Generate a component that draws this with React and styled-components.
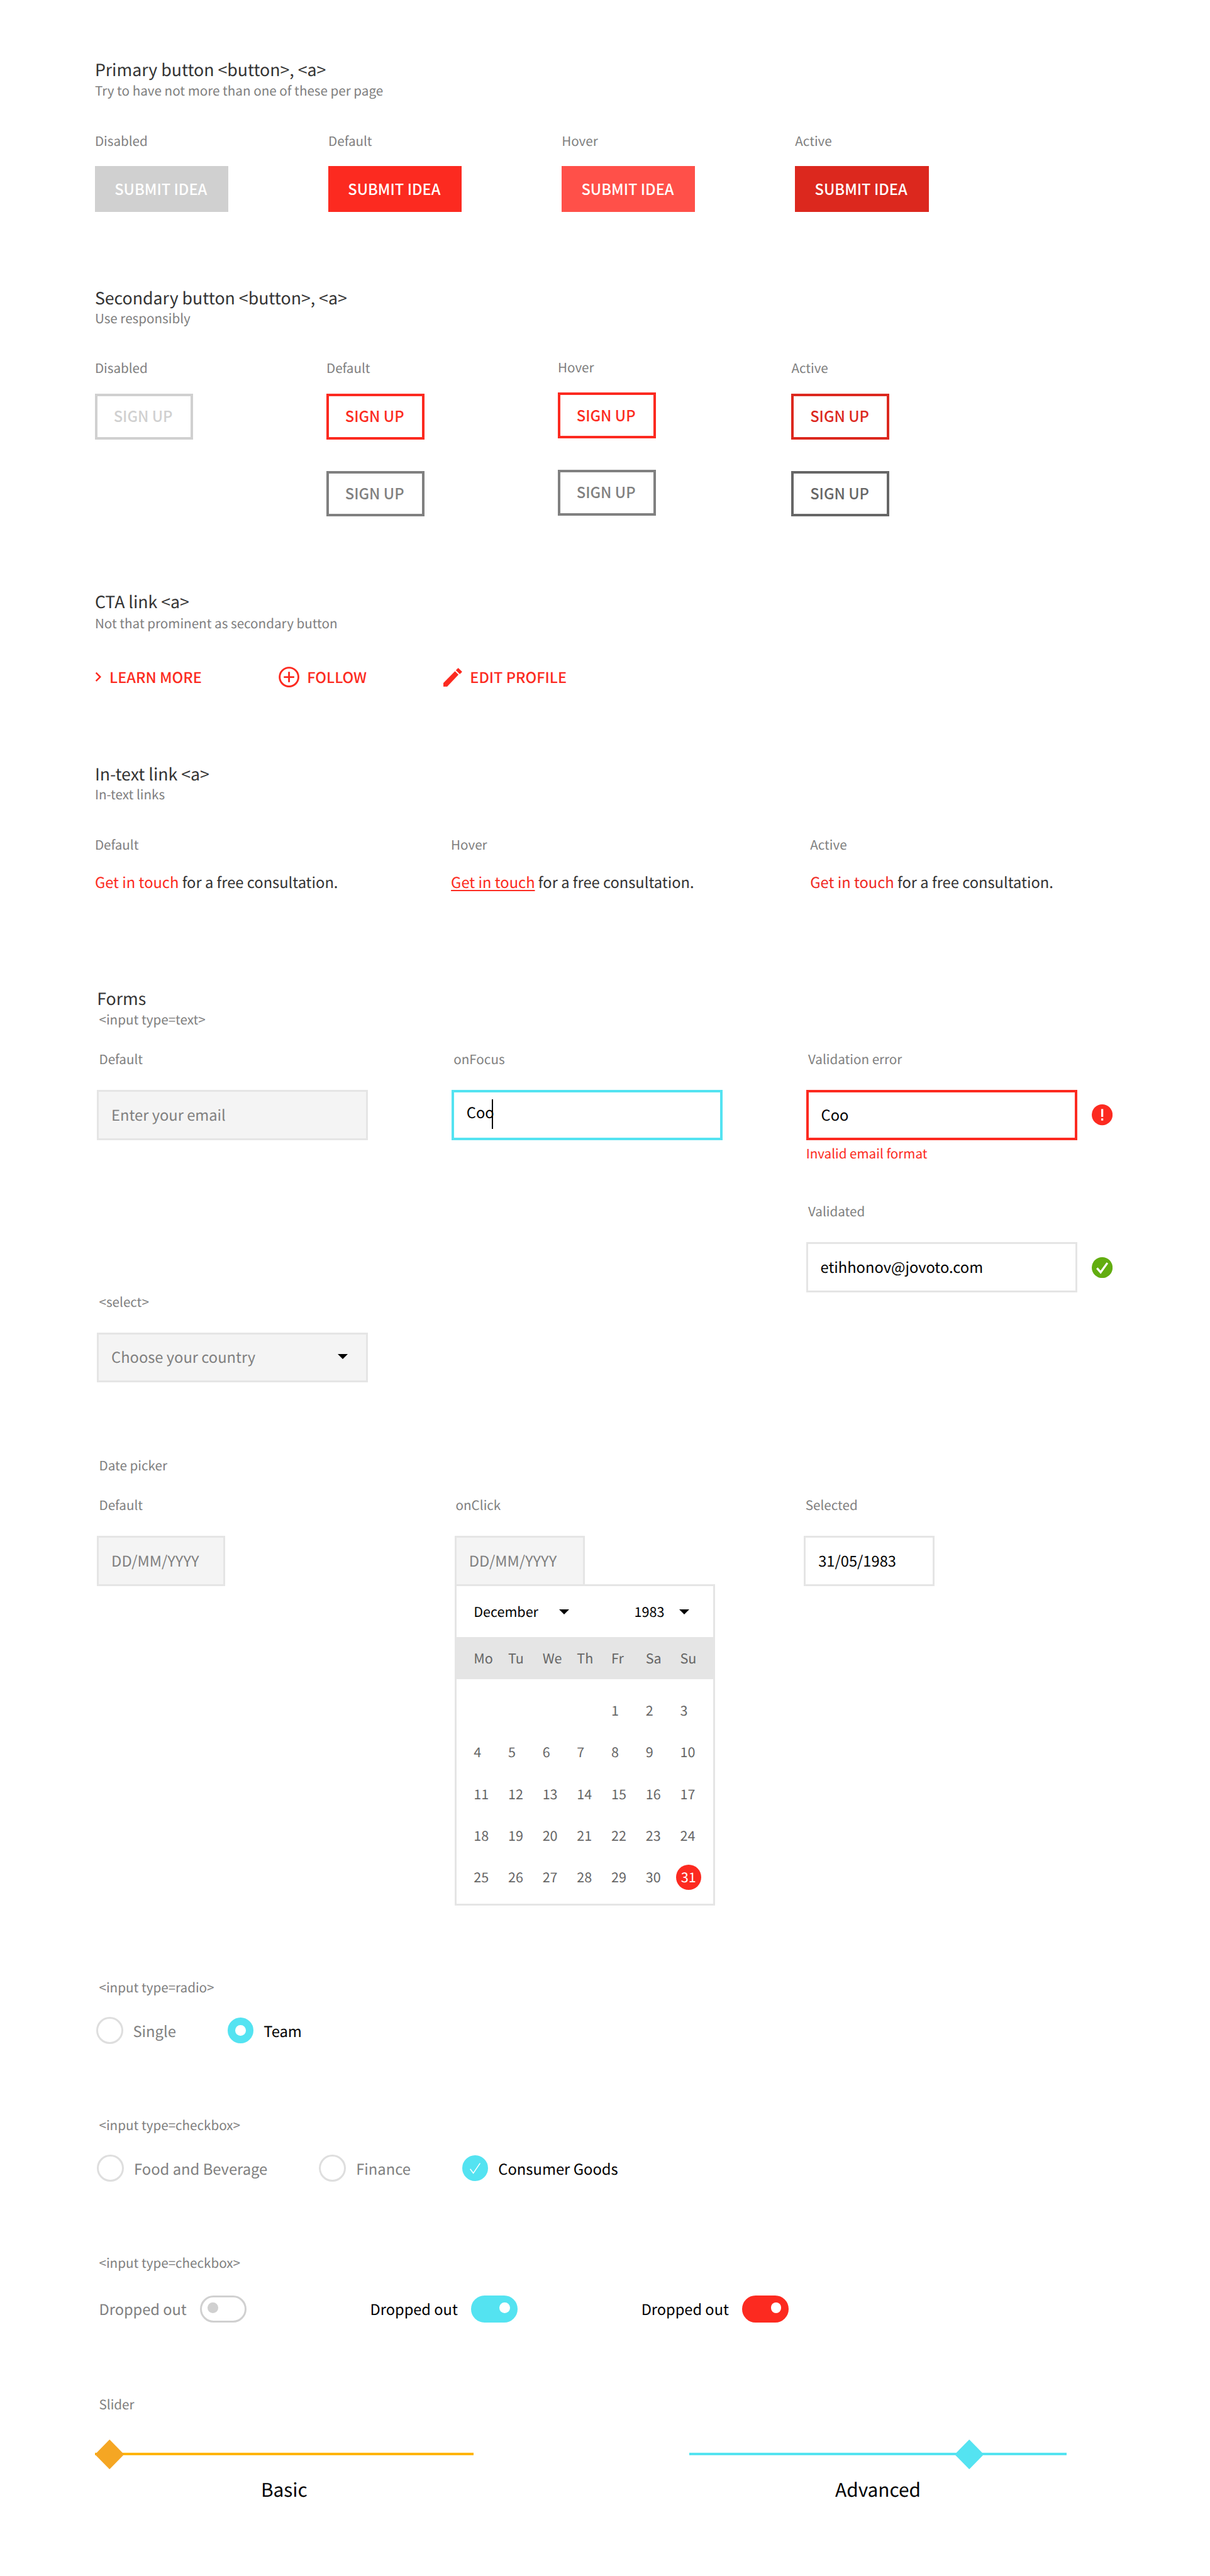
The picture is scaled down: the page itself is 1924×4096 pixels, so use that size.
import React from "react";
import styled, { createGlobalStyle } from "styled-components";

const u = (n) => `${n * 0.829}px`;
const RED = "#fc2a20";
const CYAN = "#54e3f1";
const LINE = "4px";

const Global = createGlobalStyle`
  * { box-sizing: border-box; }
  html, body { margin: 0; padding: 0; background: #fff; }
  body {
    font-family: "Noto Sans CJK SC", "Noto Sans", sans-serif;
    text-rendering: geometricPrecision;
    -webkit-font-smoothing: antialiased;
  }
`;

const Page = styled.div`
  width: 1924px;
  min-height: 4096px;
  padding: ${u(115)} 0 0 ${u(182)};
  overflow: hidden;
`;
const Title = styled.h2`
  height: ${u(40)};
  margin: ${(p) => u(p.$mt || 0)} 0 0;
  font-size: ${u(32.2)};
  line-height: ${u(35)};
  font-weight: 400;
  color: #333;
`;
const Note = styled.div`
  height: ${u(40)};
  margin: ${(p) => u(p.$mt || 0)} 0 0 ${(p) => u(p.$ml || 0)};
  font-size: ${u(24.9)};
  line-height: ${u(35)};
  font-weight: 400;
  color: #808080;
  white-space: nowrap;
`;
const Columns = styled.div`
  display: grid;
  grid-template-columns: ${(p) => p.$cols};
`;
const Column = styled.div`
  display: flex;
  flex-direction: column;
  align-items: flex-start;
  margin-top: ${(p) => u(p.$shift || 0)};
`;
const Solid = styled.button`
  display: block;
  width: ${u(256)};
  height: ${u(88)};
  margin-top: ${u(27)};
  border: 0;
  padding: 0 ${u(3)} ${u(2)} 0;
  font: inherit;
  font-size: ${u(28.6)};
  font-weight: 500;
  color: #fff;
  background: ${(p) => p.$bg};
`;
const Outline = styled.button`
  display: block;
  width: ${u(188)};
  height: ${u(88)};
  margin-top: ${(p) => u(p.$mt)};
  padding: 0 ${u(3)} ${u(2)} 0;
  font: inherit;
  font-size: ${u(28.6)};
  font-weight: 500;
  background: #fff;
  color: ${(p) => p.$c};
  border: ${LINE} solid ${(p) => p.$c};
`;
const CtaRow = styled.div`
  display: flex;
  align-items: center;
  gap: ${u(147)};
  height: ${u(40)};
  margin-top: ${u(62)};
`;
const Cta = styled.a`
  display: flex;
  align-items: center;
  gap: ${u(15)};
  color: ${RED};
  font-size: ${u(28.4)};
  font-weight: 500;
  line-height: ${u(36)};
`;
const Sentence = styled.p`
  height: ${u(40)};
  margin: ${u(33)} 0 0;
  font-size: ${u(28.6)};
  line-height: ${u(36)};
  font-weight: 400;
  color: #333;
  white-space: nowrap;
`;
const InText = styled.a`
  color: ${(p) => p.$c || RED};
  text-decoration: ${(p) => (p.$under ? "underline" : "none")};
  text-underline-offset: ${u(4)};
`;
const Forms = styled.div`
  margin: ${u(182)} 0 0 ${u(4)};
`;
const FieldRow = styled.div`
  display: flex;
  align-items: center;
  gap: ${u(28)};
  margin-top: ${u(37)};
`;
const Input = styled.div`
  display: flex;
  align-items: center;
  justify-content: space-between;
  width: ${(p) => u(p.$w || 520)};
  height: ${u(96)};
  padding: 0 ${(p) => u(p.$pr || 26)} ${u(3)} ${u(24)};
  font-size: ${u(28.6)};
  font-weight: 400;
  color: ${(p) => (p.$filled ? "#000" : "#808080")};
  background: ${(p) => (p.$filled ? "#fff" : "#f4f4f4")};
  border: ${(p) => (p.$border ? LINE : u(4))} solid ${(p) => p.$border || "#e5e5e5"};
  white-space: nowrap;
`;
const Caret = styled.i`
  display: inline-block;
  width: 2px;
  height: ${u(57)};
  margin-left: ${u(-4)};
  background: #000;
  vertical-align: middle;
`;
const ErrorText = styled.div`
  height: ${u(40)};
  margin-top: ${u(7)};
  font-size: ${u(24.9)};
  line-height: ${u(35)};
  font-weight: 400;
  color: ${RED};
`;
const Arrow = styled.span`
  display: inline-block;
  width: 0;
  height: 0;
  border-left: ${u(10)} solid transparent;
  border-right: ${u(10)} solid transparent;
  border-top: ${u(10)} solid #000;
`;
const Calendar = styled.div`
  width: ${u(500)};
  height: ${u(616)};
  margin-top: ${u(-3)};
  border: ${u(4)} solid #e5e5e5;
  background: #fff;
`;
const CalHead = styled.div`
  display: flex;
  align-items: center;
  height: ${u(98)};
  padding-left: ${u(33)};
  font-size: ${u(26)};
  font-weight: 400;
  color: #000;
`;
const CalPick = styled.div`
  display: flex;
  align-items: center;
  justify-content: space-between;
  width: ${(p) => u(p.$w)};
  margin-right: ${(p) => u(p.$mr || 0)};
`;
const WeekBand = styled.div`
  display: grid;
  grid-template-columns: repeat(7, ${u(66)});
  align-items: center;
  height: ${u(80)};
  padding-left: ${u(33)};
  background: #e5e5e5;
  font-size: ${u(26)};
  font-weight: 400;
  color: #666;
`;
const Days = styled.div`
  display: grid;
  grid-template-columns: repeat(7, ${u(66)});
  grid-auto-rows: ${u(80)};
  align-items: center;
  justify-items: start;
  margin-top: ${u(20)};
  padding-left: ${u(33)};
  font-size: ${u(26)};
  font-weight: 400;
  color: #666;
`;
const Day = styled.span`
  display: block;
  ${(p) =>
    p.$on
      ? `display:flex;align-items:center;justify-content:center;width:${u(48)};height:${u(48)};margin-left:${u(-8)};border-radius:50%;background:${RED};color:#fff;`
      : ""}
`;
const Options = styled.div`
  display: flex;
  align-items: center;
  gap: ${u(99)};
  height: ${u(52)};
  margin: ${(p) => u(p.$mt || 35)} 0 0 ${(p) => u(p.$ml || 0)};
`;
const Option = styled.label`
  display: flex;
  align-items: center;
  gap: ${u(19)};
  font-size: ${u(28.7)};
  font-weight: 400;
  color: ${(p) => (p.$on ? "#000" : "#808080")};
  white-space: nowrap;
`;
const Radio = styled.span`
  display: flex;
  align-items: center;
  justify-content: center;
  width: ${(p) => u(p.$on ? 50 : 52)};
  height: ${(p) => u(p.$on ? 50 : 52)};
  border-radius: 50%;
  border: ${u(4)} solid #dedede;
  ${(p) => (p.$on ? `background:${CYAN};border-color:${CYAN};` : "")}
`;
const RadioDot = styled.span`
  display: block;
  width: ${u(20)};
  height: ${u(20)};
  border-radius: 50%;
  background: #fff;
`;
const ToggleRow = styled.div`
  display: flex;
  align-items: center;
  gap: ${u(237)};
  margin: ${u(41)} 0 0 ${u(4)};
`;
const ToggleItem = styled.div`
  display: flex;
  align-items: center;
  gap: ${u(26)};
  font-size: ${u(28.5)};
  font-weight: 400;
  color: ${(p) => (p.$on ? "#000" : "#808080")};
  white-space: nowrap;
`;
const Toggle = styled.span`
  display: flex;
  align-items: center;
  justify-content: ${(p) => (p.$bg ? "flex-end" : "flex-start")};
  width: ${u(89)};
  height: ${u(52)};
  padding: 0 ${u(11)} ${u(4)};
  border-radius: ${u(26)};
  border: ${u(4)} solid ${(p) => p.$bg || "#d0d0d0"};
  background: ${(p) => p.$bg || "#fff"};
`;
const ToggleKnob = styled.span`
  display: block;
  width: ${u(20)};
  height: ${u(20)};
  border-radius: 50%;
  background: ${(p) => (p.$on ? "#fff" : "#d0d0d0")};
`;
const Sliders = styled.div`
  display: grid;
  grid-template-columns: ${u(726)} ${u(724)};
  column-gap: ${u(414)};
  margin-top: ${u(45)};
`;
const Slider = styled.div`
  display: flex;
  flex-direction: column;
`;
const Track = styled.div`
  position: relative;
  height: ${u(57)};
  &::before {
    content: "";
    position: absolute;
    left: 0;
    right: 0;
    top: 50%;
    height: ${u(4)};
    margin-top: ${u(-2)};
    background: ${(p) => p.$c};
  }
`;
const Diamond = styled.svg`
  position: absolute;
  top: 0;
  left: ${(p) => u(p.$x)};
  width: ${u(56)};
  height: ${u(57)};
`;
const Caption = styled.div`
  margin-top: ${u(15)};
  font-size: ${u(36)};
  line-height: ${u(46)};
  font-weight: 400;
  color: #000;
  text-align: center;
`;
const IconSvg = styled.svg`
  display: block;
  flex: none;
  width: ${(p) => u(p.$w)};
  height: ${(p) => u(p.$h)};
`;

const StateCol = ({ label, shift, children }) => (
  <Column $shift={shift}>
    <Note $mt={56}>{label}</Note>
    {children}
  </Column>
);

const AlertIcon = () => (
  <IconSvg viewBox="0 0 40 40" $w={40} $h={40}>
    <circle cx="20" cy="20" r="20" fill={RED} />
    <rect x="18" y="9" width="4" height="15" fill="#fff" />
    <rect x="18" y="27" width="4" height="4" fill="#fff" />
  </IconSvg>
);
const OkIcon = () => (
  <IconSvg viewBox="0 0 40 40" $w={40} $h={40}>
    <circle cx="20" cy="20" r="20" fill="#62ad10" />
    <path d="M10 21l7 8L30 11" fill="none" stroke="#fff" strokeWidth="4" />
  </IconSvg>
);
const DIAMOND = <polygon points="28,0 56,28.5 28,57 0,28.5" />;

const weeks = ["Mo", "Tu", "We", "Th", "Fr", "Sa", "Su"];
const cells = [...Array(4).fill(""), ...Array.from({ length: 31 }, (_, i) => i + 1)];

export default function App() {
  return (
    <Page>
      <Global />
      <Title>{"Primary button <button>, <a>"}</Title>
      <Note $mt={1}>Try to have not more than one of these per page</Note>
      <Columns $cols={`repeat(4, ${u(447.7)})`}>
        <StateCol label="Disabled"><Solid $bg="#d0d0d0">SUBMIT IDEA</Solid></StateCol>
        <StateCol label="Default"><Solid $bg={RED}>SUBMIT IDEA</Solid></StateCol>
        <StateCol label="Hover"><Solid $bg="#ff5049">SUBMIT IDEA</Solid></StateCol>
        <StateCol label="Active"><Solid $bg="#dc281e">SUBMIT IDEA</Solid></StateCol>
      </Columns>

      <Title $mt={145}>{"Secondary button <button>, <a>"}</Title>
      <Note>Use responsibly</Note>
      <Columns $cols={`${u(444)} ${u(444)} ${u(448)} ${u(448)}`}>
        <StateCol label="Disabled"><Outline $mt={27} $c="#d0d0d0">SIGN UP</Outline></StateCol>
        <StateCol label="Default">
          <Outline $mt={27} $c={RED}>SIGN UP</Outline>
          <Outline $mt={60} $c="#808080">SIGN UP</Outline>
        </StateCol>
        <StateCol label="Hover" shift={-2}>
          <Outline $mt={27} $c={RED}>SIGN UP</Outline>
          <Outline $mt={60} $c="#808080">SIGN UP</Outline>
        </StateCol>
        <StateCol label="Active">
          <Outline $mt={27} $c="#dc281e">SIGN UP</Outline>
          <Outline $mt={60} $c="#666">SIGN UP</Outline>
        </StateCol>
      </Columns>

      <Title $mt={144}>{"CTA link <a>"}</Title>
      <Note $mt={2}>Not that prominent as secondary button</Note>
      <CtaRow>
        <Cta>
          <IconSvg viewBox="0 0 13 20" $w={13} $h={20}>
            <path d="M2 2l8 8-8 8" fill="none" stroke={RED} strokeWidth="3" />
          </IconSvg>
          LEARN MORE
        </Cta>
        <Cta>
          <IconSvg viewBox="0 0 40 40" $w={40} $h={40}>
            <circle cx="20" cy="20" r="18" fill="none" stroke={RED} strokeWidth="3.5" />
            <path d="M20 10v20M10 20h20" stroke={RED} strokeWidth="3.5" />
          </IconSvg>
          FOLLOW
        </Cta>
        <Cta>
          <IconSvg viewBox="0 0 36 36" $w={36} $h={36}>
            <polygon points="0,36 0,29 22.3,6.3 29,13 7.3,36" fill={RED} />
            <polygon points="25,4.5 28.5,1 35,7.5 31.5,11" fill={RED} stroke={RED} strokeWidth="1.5" strokeLinejoin="round" />
          </IconSvg>
          EDIT PROFILE
        </Cta>
      </CtaRow>

      <Title $mt={147}>{"In-text link <a>"}</Title>
      <Note>In-text links</Note>
      <Columns $cols={`${u(683)} ${u(689)} 1fr`}>
        <Column>
          <Note $mt={56}>Default</Note>
          <Sentence><InText>Get in touch</InText> for a free consultation.</Sentence>
        </Column>
        <Column>
          <Note $mt={56}>Hover</Note>
          <Sentence><InText $under>Get in touch</InText> for a free consultation.</Sentence>
        </Column>
        <Column>
          <Note $mt={56}>Active</Note>
          <Sentence><InText $c="#f0291f">Get in touch</InText> for a free consultation.</Sentence>
        </Column>
      </Columns>

      <Forms>
        <Title>Forms</Title>
        <Note $mt={1} $ml={4}>{"<input type=text>"}</Note>
        <Columns $cols={`${u(680)} ${u(680)} 1fr`}>
          <Column>
            <Note $mt={36} $ml={4}>Default</Note>
            <FieldRow><Input>Enter your email</Input></FieldRow>
          </Column>
          <Column>
            <Note $mt={36} $ml={4}>onFocus</Note>
            <FieldRow>
              <Input $filled $border={CYAN}>
                <span>Coo<Caret /></span>
              </Input>
            </FieldRow>
          </Column>
          <Column>
            <Note $mt={36} $ml={4}>Validation error</Note>
            <FieldRow>
              <Input $filled $border={RED}>Coo</Input>
              <AlertIcon />
            </FieldRow>
            <ErrorText>Invalid email format</ErrorText>
            <Note $mt={72} $ml={4}>Validated</Note>
            <FieldRow>
              <Input $filled>etihhonov@jovoto.com</Input>
              <OkIcon />
            </FieldRow>
          </Column>
        </Columns>

        <Note $ml={4}>{"<select>"}</Note>
        <FieldRow>
          <Input $pr={35}>
            Choose your country
            <Arrow />
          </Input>
        </FieldRow>

        <Note $mt={141} $ml={4}>Date picker</Note>
        <Columns $cols={`${u(686)} ${u(670)} 1fr`}>
          <Column>
            <Note $mt={36} $ml={4}>Default</Note>
            <FieldRow><Input $w={246}>DD/MM/YYYY</Input></FieldRow>
          </Column>
          <Column>
            <Note $mt={36} $ml={2}>onClick</Note>
            <FieldRow><Input $w={250}>DD/MM/YYYY</Input></FieldRow>
            <Calendar>
              <CalHead>
                <CalPick $w={183} $mr={125}>December<Arrow /></CalPick>
                <CalPick $w={105}>1983<Arrow /></CalPick>
              </CalHead>
              <WeekBand>
                {weeks.map((w) => <span key={w}>{w}</span>)}
              </WeekBand>
              <Days>
                {cells.map((d, i) => <Day key={i} $on={d === 31}>{d}</Day>)}
              </Days>
            </Calendar>
          </Column>
          <Column>
            <Note $mt={36} $ml={3}>Selected</Note>
            <FieldRow><Input $w={250} $filled>31/05/1983</Input></FieldRow>
          </Column>
        </Columns>

        <Note $mt={139} $ml={4}>{"<input type=radio>"}</Note>
        <Options $ml={-2}>
          <Option><Radio />Single</Option>
          <Option $on><Radio $on><RadioDot /></Radio>Team</Option>
        </Options>

        <Note $mt={137} $ml={4}>{"<input type=checkbox>"}</Note>
        <Options>
          <Option><Radio />Food and Beverage</Option>
          <Option><Radio />Finance</Option>
          <Option $on>
            <Radio $on>
              <IconSvg viewBox="0 0 24 24" $w={24} $h={24}>
                <path d="M2 13l6 8L21 2" fill="none" stroke="#fff" strokeWidth="1.8" />
              </IconSvg>
            </Radio>
            Consumer Goods
          </Option>
        </Options>

        <Note $mt={137} $ml={4}>{"<input type=checkbox>"}</Note>
        <ToggleRow>
          <ToggleItem>Dropped out<Toggle><ToggleKnob /></Toggle></ToggleItem>
          <ToggleItem $on>Dropped out<Toggle $bg={CYAN}><ToggleKnob $on /></Toggle></ToggleItem>
          <ToggleItem $on>Dropped out<Toggle $bg={RED}><ToggleKnob $on /></Toggle></ToggleItem>
        </ToggleRow>

        <Note $mt={139} $ml={4}>Slider</Note>
      </Forms>
      <Sliders>
        <Slider>
          <Track $c="#ffb400">
            <Diamond viewBox="0 0 56 57" $x={0} fill="#f5a623">{DIAMOND}</Diamond>
          </Track>
          <Caption>Basic</Caption>
        </Slider>
        <Slider>
          <Track $c={CYAN}>
            <Diamond viewBox="0 0 56 57" $x={509} fill={CYAN}>{DIAMOND}</Diamond>
          </Track>
          <Caption>Advanced</Caption>
        </Slider>
      </Sliders>
    </Page>
  );
}
